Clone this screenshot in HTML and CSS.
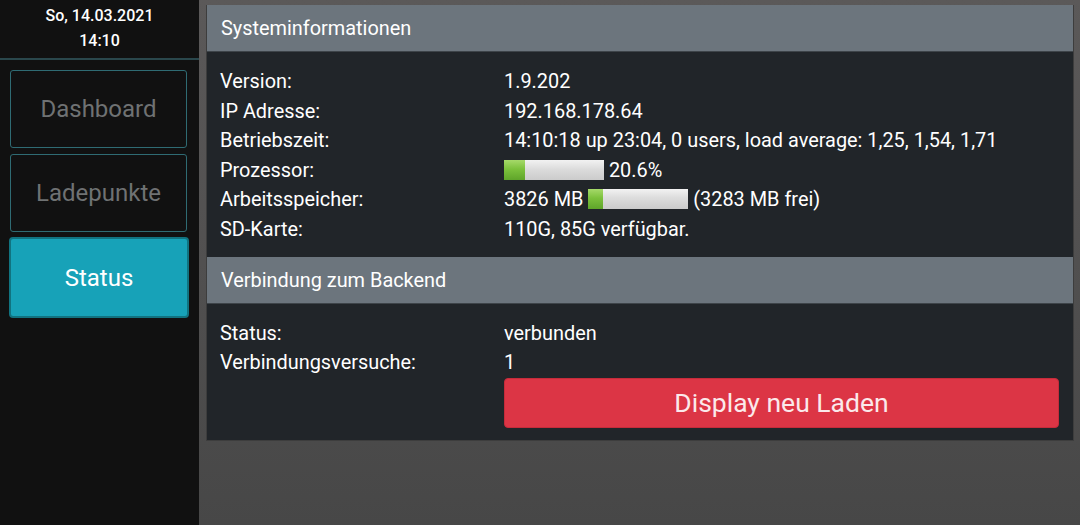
FILE: index.html
```html
<!DOCTYPE html>
<html lang="de">
  <head>
    <meta charset="UTF-8" />
    <meta name="viewport" content="width=device-width, initial-scale=1.0" />
    <title>Status</title>
    <link rel="stylesheet" href="styles.css">
  </head>
  <body>
    <aside id="sidebar">
      <div id="clock">
        <div>So, 14.03.2021</div>
        <div>14:10</div>
      </div>
      <nav id="menu">
        <button class="nav-btn">Dashboard</button>
        <button class="nav-btn">Ladepunkte</button>
        <button class="nav-btn active">Status</button>
      </nav>
    </aside>

    <main id="content">
      <div class="card">
        <div class="card-header">Systeminformationen</div>
        <div class="card-body">
          <div class="info-row"><span>Version:</span><span>1.9.202</span></div>
          <div class="info-row"><span>IP Adresse:</span><span>192.168.178.64</span></div>
          <div class="info-row"><span>Betriebszeit:</span><span>14:10:18 up 23:04, 0 users, load average: 1,25, 1,54, 1,71</span></div>
          <div class="info-row">
            <span>Prozessor:</span>
            <span><span class="bar"><span class="fill" style="width: 20.6%"></span></span> 20.6%</span>
          </div>
          <div class="info-row">
            <span>Arbeitsspeicher:</span>
            <span>3826 MB <span class="bar"><span class="fill" style="width: 14.2%"></span></span> (3283 MB frei)</span>
          </div>
          <div class="info-row"><span>SD-Karte:</span><span>110G, 85G verfügbar.</span></div>
        </div>
        <div class="card-header">Verbindung zum Backend</div>
        <div class="card-body">
          <div class="info-row"><span>Status:</span><span>verbunden</span></div>
          <div class="info-row"><span>Verbindungsversuche:</span><span>1</span></div>
          <div class="info-row">
            <span></span>
            <button id="reload">Display neu Laden</button>
          </div>
        </div>
      </div>
    </main>
  </body>
</html>
```

FILE: styles.css
```css
html,
body {
  height: 100%;
}
body {
  margin: 0;
  display: flex;
  font-family: Roboto, "Liberation Sans", sans-serif;
  background: linear-gradient(#5b5959, #474747);
  color: #fff;
  overflow: hidden;
}
#sidebar {
  width: 199px;
  flex-shrink: 0;
  background: #111;
}
#clock {
  font-size: 16px;
  font-weight: 500;
  line-height: 24.5px;
  text-align: center;
  padding-top: 4px;
  height: 54px;
  border-bottom: 2px solid #2a474c;
}
#menu {
  display: flex;
  flex-direction: column;
  gap: 6px;
  padding: 10px 12px 0 10px;
}
.nav-btn {
  font-family: inherit;
  font-size: 24px;
  height: 78px;
  background: transparent;
  color: #6f7273;
  border: 1px solid #2f6b73;
  border-radius: 3px;
}
.nav-btn.active {
  margin: -1px -2px 0 -1px;
  height: 81px;
  background: #17a2b8;
  color: #fff;
  border: 2px solid #117380;
  border-radius: 4px;
}
#content {
  flex: 1;
  padding: 5px 6px 0 7px;
}
.card {
  border: 1px solid #3d3d3d;
  border-top: none;
  background: #212529;
}
.card-header {
  background: #6c757d;
  font-size: 19.9px;
  height: 46px;
  line-height: 47px;
  padding: 0 14px;
  border-bottom: 1px solid #3e4449;
}
.card-body {
  padding: 15px 14px 12px 13px;
  font-size: 19.9px;
  line-height: 29.6px;
}
.info-row {
  display: grid;
  grid-template-columns: 284px 1fr;
}
.bar {
  display: inline-block;
  width: 100px;
  height: 20px;
  vertical-align: -3px;
  background: linear-gradient(#f2f2f2, #dcdcdc 45%, #cbcbcb);
}
.fill {
  display: block;
  height: 100%;
  background: linear-gradient(#a6d96a, #7cc13c 45%, #5fa52a);
}
#reload {
  margin-top: 0;
  height: 50px;
  font-family: inherit;
  font-size: 26.5px;
  color: #fbe9eb;
  background: #dc3545;
  border: 1px solid #c62b3a;
  border-radius: 4px;
}
```
